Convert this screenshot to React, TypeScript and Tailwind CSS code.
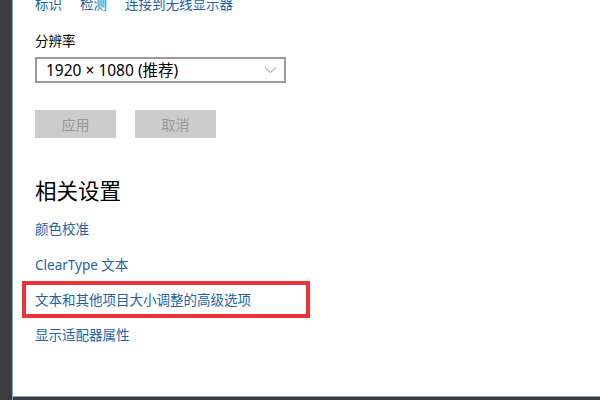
import React from "react";

const font = { fontFamily: '"Noto Sans", "Noto Sans CJK SC", sans-serif' };

export default function App() {
  return (
    <div
      className="w-[600px] h-[400px] flex bg-white overflow-hidden"
      style={font}
    >
      <div className="w-[13px] h-full bg-[#3b3c3d] border-r border-[#7fa9c9] shrink-0" />
      <div className="flex-1 flex flex-col">
        <div className="flex-1 flex flex-col pl-[22px] overflow-hidden">
          <div className="-mt-[5px] h-[18px] flex gap-[18px] text-[13.5px] leading-[18px] text-[#1d63a8]">
            <span>标识</span>
            <span>检测</span>
            <span>连接到无线显示器</span>
          </div>
          <div className="mt-[18px] h-[20px] text-[13.5px] leading-[20px] text-black">
            分辨率
          </div>
          <div className="mt-[6px] w-[251px] h-[26px] border-2 border-[#9a9a9a] flex items-center justify-between pl-[9px] pr-[7px]">
            <span className="text-[15.5px] leading-[20px] text-black">
              1920 × 1080 (推荐)
            </span>
            <svg width="13" height="8" viewBox="0 0 13 8" fill="none">
              <path d="M1 1.5 L6.5 6.5 L12 1.5" stroke="#8a8a8a" strokeWidth="1" />
            </svg>
          </div>
          <div className="mt-[27px] flex gap-[19px]">
            <div className="w-[81px] h-[28px] bg-[#cccccc] text-[#999999] text-[14px] flex items-center justify-center">
              应用
            </div>
            <div className="w-[81px] h-[28px] bg-[#cccccc] text-[#999999] text-[14px] flex items-center justify-center">
              取消
            </div>
          </div>
          <div className="mt-[38px] h-[30px] text-[21.5px] leading-[30px] text-black">
            相关设置
          </div>
          <div className="mt-[13px] h-[20px] text-[13.5px] leading-[20px] text-[#1d63a8]">
            颜色校准
          </div>
          <div className="mt-[16px] h-[20px] text-[13.5px] leading-[20px] text-[#1d63a8]">
            ClearType 文本
          </div>
          <div className="mt-[6px] -ml-[13px] w-[288px] h-[37px] border-4 border-[#ee3338] flex items-center pl-[9px]">
            <span className="text-[13.5px] leading-[20px] text-[#1d63a8]">
              文本和其他项目大小调整的高级选项
            </span>
          </div>
          <div className="mt-[7px] h-[20px] text-[13.5px] leading-[20px] text-[#1d63a8]">
            显示适配器属性
          </div>
        </div>
        <div className="h-[1px] bg-[#7fa9c9]" />
        <div className="h-[3px] bg-[#3b3c3d]" />
      </div>
    </div>
  );
}
